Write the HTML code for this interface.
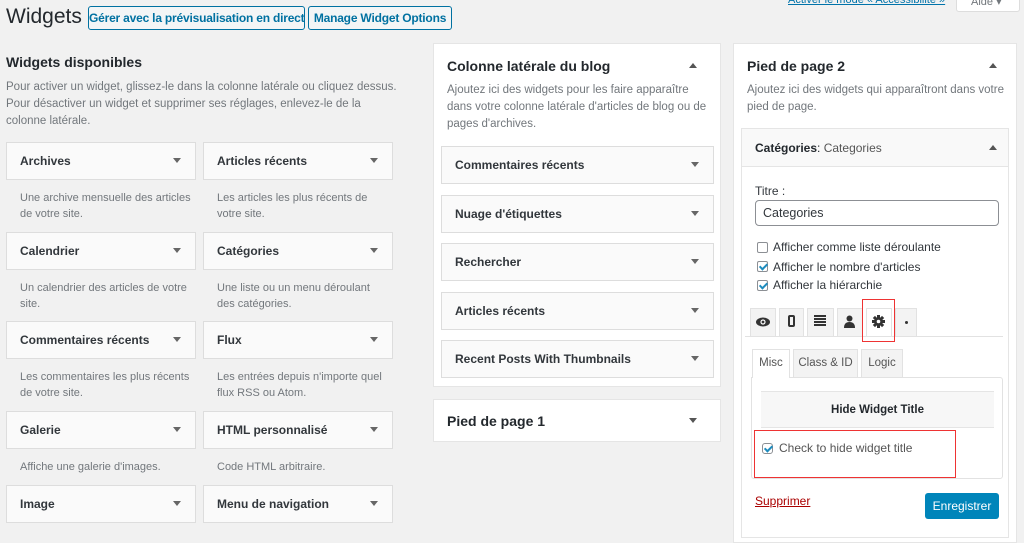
<!DOCTYPE html>
<html><head><meta charset="utf-8"><style>
*{box-sizing:border-box;margin:0;padding:0}
body{width:1024px;height:535px;overflow:hidden;background:#f1f1f1;font-family:"Liberation Sans",sans-serif;color:#23282d;position:relative}
.a{position:absolute}
.btn{position:absolute;border:1px solid #0071a1;color:#0071a1;background:#f3f5f6;border-radius:3px;font-size:12px;font-weight:bold;text-align:center;line-height:22px;height:24px;white-space:nowrap;letter-spacing:-0.2px}
.w{position:absolute;background:#fafafa;border:1px solid #ddd;height:38px;font-size:12px;font-weight:bold;line-height:36px;padding-left:13px;color:#32373c}
.w:after{content:"";position:absolute;right:14px;top:15px;border-left:4px solid transparent;border-right:4px solid transparent;border-top:5px solid #666}
.d{position:absolute;font-size:11px;color:#72777c;line-height:16px}
.p{position:absolute;background:#fff;border:1px solid #e5e5e5}
.h{position:absolute;font-size:14px;font-weight:bold;color:#23282d}
.up{position:absolute;border-left:4px solid transparent;border-right:4px solid transparent;border-bottom:5px solid #555}
.txt{position:absolute;font-size:12px;color:#72777c;line-height:17px}
.cb{position:absolute;width:11px;height:11px;border:1px solid #8c8f94;border-radius:2px;background:#fff}
.cb.c:after{content:"";position:absolute;left:3px;top:0px;width:3px;height:6px;border:solid #1e8cbe;border-width:0 2px 2px 0;transform:rotate(45deg)}
.lbl{position:absolute;font-size:12px;color:#32373c}
.tab{position:absolute;top:308px;height:28px;background:#f3f3f3;border:1px solid #e2e2e2;border-bottom:none}
</style></head><body>
<div class="a" style="left:788px;top:-6px;font-size:11px;color:#0073aa;text-decoration:underline">Activer le mode « Accessibilité »</div>
<div class="a" style="left:956px;top:-6px;width:64px;height:18px;background:#fff;border:1px solid #ddd;border-radius:0 0 3px 3px;font-size:11px;color:#72777c;padding-left:14px;line-height:14px">Aide ▾</div>
<div class="a" style="left:6px;top:5px;font-size:21px;color:#23282d">Widgets</div>
<div class="btn" style="left:88px;top:6px;width:217px">Gérer avec la prévisualisation en direct</div>
<div class="btn" style="left:308px;top:6px;width:144px">Manage Widget Options</div>

<div class="h" style="left:6px;top:54px">Widgets disponibles</div>
<div class="txt" style="left:6px;top:79px;font-size:11.5px">Pour activer un widget, glissez-le dans la colonne latérale ou cliquez dessus.<br>Pour désactiver un widget et supprimer ses réglages, enlevez-le de la<br>colonne latérale.</div>

<div class="w" style="left:6px;top:142px;width:190px">Archives</div>
<div class="w" style="left:203px;top:142px;width:190px">Articles récents</div>
<div class="d" style="left:20px;top:190px">Une archive mensuelle des articles<br>de votre site.</div>
<div class="d" style="left:217px;top:190px">Les articles les plus récents de<br>votre site.</div>
<div class="w" style="left:6px;top:232px;width:190px">Calendrier</div>
<div class="w" style="left:203px;top:232px;width:190px">Catégories</div>
<div class="d" style="left:20px;top:280px">Un calendrier des articles de votre<br>site.</div>
<div class="d" style="left:217px;top:280px">Une liste ou un menu déroulant<br>des catégories.</div>
<div class="w" style="left:6px;top:321px;width:190px">Commentaires récents</div>
<div class="w" style="left:203px;top:321px;width:190px">Flux</div>
<div class="d" style="left:20px;top:369px">Les commentaires les plus récents<br>de votre site.</div>
<div class="d" style="left:217px;top:369px">Les entrées depuis n'importe quel<br>flux RSS ou Atom.</div>
<div class="w" style="left:6px;top:411px;width:190px">Galerie</div>
<div class="w" style="left:203px;top:411px;width:190px">HTML personnalisé</div>
<div class="d" style="left:20px;top:459px">Affiche une galerie d'images.</div>
<div class="d" style="left:217px;top:459px">Code HTML arbitraire.</div>
<div class="w" style="left:6px;top:485px;width:190px">Image</div>
<div class="w" style="left:203px;top:485px;width:190px">Menu de navigation</div>

<div class="p" style="left:433px;top:43px;width:288px;height:344px"></div>
<div class="h" style="left:447px;top:58px">Colonne latérale du blog</div>
<div class="up" style="left:689px;top:63px"></div>
<div class="txt" style="left:447px;top:82px;font-size:11.5px">Ajoutez ici des widgets pour les faire apparaître<br>dans votre colonne latérale d'articles de blog ou de<br>pages d'archives.</div>
<div class="w" style="left:441px;top:146px;width:273px">Commentaires récents</div>
<div class="w" style="left:441px;top:195px;width:273px">Nuage d'étiquettes</div>
<div class="w" style="left:441px;top:243px;width:273px">Rechercher</div>
<div class="w" style="left:441px;top:292px;width:273px">Articles récents</div>
<div class="w" style="left:441px;top:340px;width:273px">Recent Posts With Thumbnails</div>
<div class="p" style="left:433px;top:399px;width:288px;height:43px"></div>
<div class="h" style="left:447px;top:413px">Pied de page 1</div>
<div class="a" style="left:689px;top:418px;border-left:4px solid transparent;border-right:4px solid transparent;border-top:5px solid #555"></div>

<div class="p" style="left:733px;top:43px;width:284px;height:500px"></div>
<div class="h" style="left:747px;top:58px">Pied de page 2</div>
<div class="up" style="left:989px;top:63px"></div>
<div class="txt" style="left:747px;top:82px;font-size:11.5px">Ajoutez ici des widgets qui apparaîtront dans votre<br>pied de page.</div>
<div class="a" style="left:741px;top:128px;width:268px;height:410px;background:#fff;border:1px solid #e5e5e5"></div>
<div class="a" style="left:742px;top:129px;width:266px;height:38px;background:#f9f9f9;border-bottom:1px solid #e5e5e5;font-size:12px;font-weight:bold;line-height:38px;padding-left:13px">Catégories<span style="font-weight:normal">:</span> <span style="font-weight:normal;color:#555">Categories</span></div>
<div class="up" style="left:989px;top:145px"></div>
<div class="lbl" style="left:755px;top:184px">Titre :</div>
<div class="a" style="left:755px;top:200px;width:244px;height:26px;border:1px solid #8c8f94;border-radius:4px;font-size:12.5px;line-height:24px;padding-left:7px;color:#32373c">Categories</div>
<div class="cb" style="left:757px;top:242px"></div><div class="lbl" style="left:773px;top:240px">Afficher comme liste déroulante</div>
<div class="cb c" style="left:757px;top:261px"></div><div class="lbl" style="left:773px;top:260px">Afficher le nombre d'articles</div>
<div class="cb c" style="left:757px;top:280px"></div><div class="lbl" style="left:773px;top:278px">Afficher la hiérarchie</div>

<div class="a" style="left:745px;top:336px;width:258px;border-top:1px solid #e2e2e2"></div>
<div class="tab" style="left:750px;width:26px"></div>
<svg class="a" style="left:755px;top:316px" width="16" height="12" viewBox="0 0 16 12"><ellipse cx="8" cy="6" rx="7" ry="4.5" fill="#333"/><circle cx="8" cy="6" r="2.6" fill="#fff"/><circle cx="8" cy="6" r="1.4" fill="#333"/></svg>
<div class="tab" style="left:779px;width:25px"></div>
<div class="a" style="left:788px;top:315px;width:7px;height:12px;border:2px solid #333;border-radius:2px"></div>
<div class="tab" style="left:807px;width:27px"></div>
<div class="a" style="left:814px;top:315px;width:12px;height:2px;background:#333;box-shadow:0 3px 0 #333,0 6px 0 #333,0 9px 0 #333"></div>
<div class="tab" style="left:837px;width:26px"></div>
<svg class="a" style="left:843px;top:315px" width="13" height="13" viewBox="0 0 13 13"><circle cx="6.5" cy="3.5" r="3" fill="#333"/><path d="M1 13 Q1 7 6.5 7 Q12 7 12 13Z" fill="#333"/></svg>
<div class="tab" style="left:866px;width:26px;background:#fff"></div>
<svg class="a" style="left:872px;top:315px" width="13" height="13" viewBox="0 0 13 13"><g fill="#333"><circle cx="6.5" cy="6.5" r="4.3"/><rect x="5" y="0" width="3" height="13"/><rect x="0" y="5" width="13" height="3"/><rect x="5" y="0" width="3" height="13" transform="rotate(45 6.5 6.5)"/><rect x="5" y="0" width="3" height="13" transform="rotate(-45 6.5 6.5)"/></g><circle cx="6.5" cy="6.5" r="1.8" fill="#fff"/></svg>
<div class="tab" style="left:895px;width:22px"></div>
<div class="a" style="left:905px;top:321px;width:3px;height:3px;background:#333;border-radius:50%"></div>
<div class="a" style="left:862px;top:299px;width:33px;height:43px;border:1px solid #e33"></div>

<div class="a" style="left:751px;top:377px;width:252px;height:102px;border:1px solid #e2e2e2;border-radius:0 3px 3px 3px"></div>
<div class="a" style="left:752px;top:349px;width:38px;height:29px;background:#fff;border:1px solid #e2e2e2;border-bottom:none;font-size:11.5px;color:#555;line-height:27px;text-align:center">Misc</div>
<div class="a" style="left:793px;top:349px;width:65px;height:28px;background:#f3f3f3;border:1px solid #e2e2e2;border-bottom:none;font-size:11.5px;color:#555;line-height:27px;text-align:center">Class &amp; ID</div>
<div class="a" style="left:861px;top:349px;width:42px;height:28px;background:#f3f3f3;border:1px solid #e2e2e2;border-bottom:none;font-size:11.5px;color:#555;line-height:27px;text-align:center">Logic</div>
<div class="a" style="left:761px;top:391px;width:233px;height:37px;background:#f7f7f7;border-top:1px solid #e5e5e5;border-bottom:1px solid #e5e5e5;font-size:11.5px;font-weight:bold;text-align:center;line-height:36px">Hide Widget Title</div>
<div class="cb c" style="left:762px;top:443px;border-radius:3px"></div>
<div class="a" style="left:779px;top:441px;font-size:12px;color:#555">Check to hide widget title</div>
<div class="a" style="left:754px;top:430px;width:202px;height:48px;border:1px solid #e33"></div>
<div class="a" style="left:755px;top:494px;font-size:12px;color:#a00;text-decoration:underline">Supprimer</div>
<div class="a" style="left:925px;top:493px;width:74px;height:26px;background:#0085ba;border-radius:3px;color:#fff;font-size:12px;text-align:center;line-height:26px">Enregistrer</div>
</body></html>
